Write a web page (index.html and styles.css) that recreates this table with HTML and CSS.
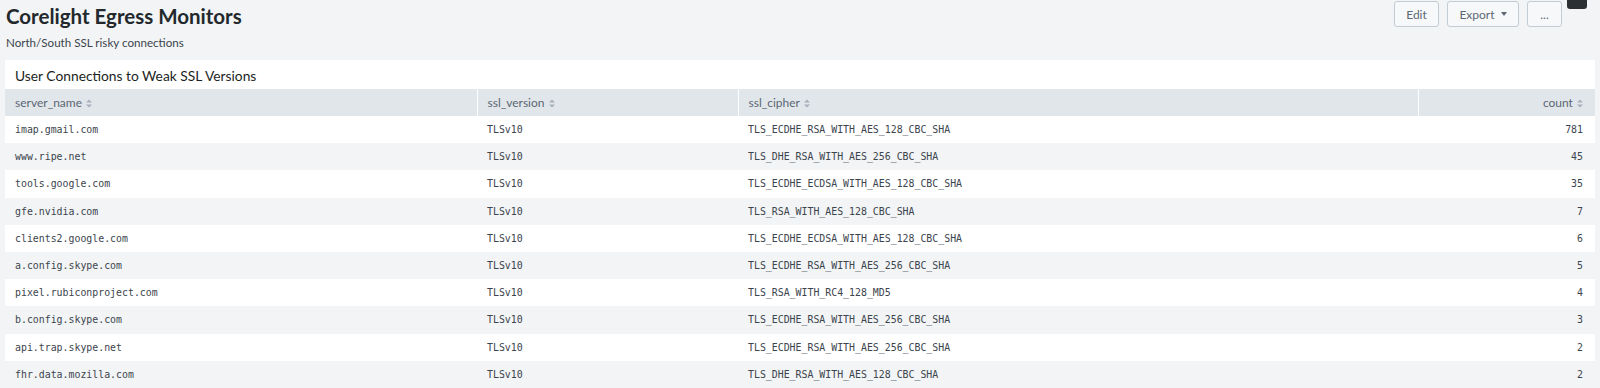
FILE: index.html
```html
<!DOCTYPE html>
<html>
<head>
<meta charset="utf-8">
<link rel="stylesheet" href="styles.css">
</head>
<body>
<div class="page">
  <header class="dash-header">
    <div class="dash-titles">
      <h1 class="dash-title">Corelight Egress Monitors</h1>
      <p class="dash-desc">North/South SSL risky connections</p>
    </div>
    <div class="dash-actions">
      <button class="btn btn-edit">Edit</button>
      <button class="btn btn-export">Export <span class="caret"></span></button>
      <button class="btn btn-more">...</button>
      <span class="dark-tab"></span>
    </div>
  </header>

  <section class="panel">
    <h2 class="panel-title">User Connections to Weak SSL Versions</h2>
    <table class="tbl">
      <colgroup>
        <col class="c1"><col class="c2"><col class="c3"><col class="c4">
      </colgroup>
      <thead>
        <tr>
          <th>server_name <svg class="sort" viewBox="0 0 6 9"><path d="M0 3.6L3 0.4L6 3.6Z M0 5.4L3 8.6L6 5.4Z"/></svg></th>
          <th>ssl_version <svg class="sort" viewBox="0 0 6 9"><path d="M0 3.6L3 0.4L6 3.6Z M0 5.4L3 8.6L6 5.4Z"/></svg></th>
          <th>ssl_cipher <svg class="sort" viewBox="0 0 6 9"><path d="M0 3.6L3 0.4L6 3.6Z M0 5.4L3 8.6L6 5.4Z"/></svg></th>
          <th class="num">count <svg class="sort" viewBox="0 0 6 9"><path d="M0 3.6L3 0.4L6 3.6Z M0 5.4L3 8.6L6 5.4Z"/></svg></th>
        </tr>
      </thead>
      <tbody>
        <tr><td>imap.gmail.com</td><td>TLSv10</td><td>TLS_ECDHE_RSA_WITH_AES_128_CBC_SHA</td><td class="num">781</td></tr>
        <tr><td>www.ripe.net</td><td>TLSv10</td><td>TLS_DHE_RSA_WITH_AES_256_CBC_SHA</td><td class="num">45</td></tr>
        <tr><td>tools.google.com</td><td>TLSv10</td><td>TLS_ECDHE_ECDSA_WITH_AES_128_CBC_SHA</td><td class="num">35</td></tr>
        <tr><td>gfe.nvidia.com</td><td>TLSv10</td><td>TLS_RSA_WITH_AES_128_CBC_SHA</td><td class="num">7</td></tr>
        <tr><td>clients2.google.com</td><td>TLSv10</td><td>TLS_ECDHE_ECDSA_WITH_AES_128_CBC_SHA</td><td class="num">6</td></tr>
        <tr><td>a.config.skype.com</td><td>TLSv10</td><td>TLS_ECDHE_RSA_WITH_AES_256_CBC_SHA</td><td class="num">5</td></tr>
        <tr><td>pixel.rubiconproject.com</td><td>TLSv10</td><td>TLS_RSA_WITH_RC4_128_MD5</td><td class="num">4</td></tr>
        <tr><td>b.config.skype.com</td><td>TLSv10</td><td>TLS_ECDHE_RSA_WITH_AES_256_CBC_SHA</td><td class="num">3</td></tr>
        <tr><td>api.trap.skype.net</td><td>TLSv10</td><td>TLS_ECDHE_RSA_WITH_AES_256_CBC_SHA</td><td class="num">2</td></tr>
        <tr><td>fhr.data.mozilla.com</td><td>TLSv10</td><td>TLS_DHE_RSA_WITH_AES_128_CBC_SHA</td><td class="num">2</td></tr>
      </tbody>
    </table>
  </section>
</div>
</body>
</html>
```

FILE: styles.css
```css
* { box-sizing: border-box; }
html, body {
  margin: 0;
  padding: 0;
  background: #f2f4f5;
  font-family: Lato, "Open Sans", "Liberation Sans", sans-serif;
  color: #3c444d;
  overflow: hidden;
}
.page {
  padding: 0 5px 0 5px;
}
.dash-header {
  display: flex;
  justify-content: space-between;
  align-items: flex-start;
  height: 60px;
}
.dash-titles {
  padding-left: 1px;
  padding-top: 4px;
}
.dash-title {
  margin: 0;
  font-size: 20.5px;
  line-height: 24px;
  font-weight: 700;
  color: #23282d;
}
.dash-desc {
  margin: 7px 0 0 0;
  font-size: 11.6px;
  line-height: 16px;
  color: #3c444d;
}
.dash-actions {
  position: relative;
  display: flex;
  gap: 8px;
  padding-top: 1px;
  padding-right: 33px;
}
.btn {
  height: 26px;
  border: 1px solid #c3cbd4;
  border-radius: 3px;
  background: #f7f8fa;
  color: #5c6773;
  font-family: inherit;
  font-size: 12px;
  padding: 0;
  display: inline-flex;
  align-items: center;
  justify-content: center;
  gap: 6px;
}
.btn-edit { width: 45px; }
.btn-export { width: 72px; }
.btn-more { width: 35px; }
.caret {
  width: 0; height: 0;
  border-left: 3.5px solid transparent;
  border-right: 3.5px solid transparent;
  border-top: 4px solid #5c6773;
}
.dark-tab {
  position: absolute;
  right: 8px;
  top: -11px;
  width: 20px;
  height: 20px;
  background: #2b3033;
  border-radius: 3px;
}
.panel {
  background: #fff;
}
.panel-title {
  margin: 0;
  padding: 7px 10px 5px 10px;
  height: 29px;
  font-size: 13.8px;
  line-height: 17px;
  font-weight: 400;
  color: #1b1f23;
}
.tbl {
  width: 100%;
  border-collapse: collapse;
  table-layout: fixed;
}
.c1 { width: 472px; }
.c2 { width: 261px; }
.c3 { width: 680px; }
.c4 { width: auto; }
.tbl th {
  background: #e1e6eb;
  height: 27px;
  padding: 0 10px;
  text-align: left;
  font-weight: 400;
  font-size: 12px;
  color: #5c6773;
  border-left: 1px solid #fff;
  white-space: nowrap;
}
.tbl th:first-child { border-left: none; }
.tbl td {
  height: 27.2px;
  padding: 0 10px;
  font-family: "DejaVu Sans Mono", "Liberation Mono", monospace;
  font-size: 9.9px;
  color: #3c444d;
  white-space: nowrap;
}
.tbl tbody tr:nth-child(even) td { background: #f2f4f5; }
.tbl .num { text-align: right; padding-right: 12px; }
.sort {
  display: inline-block;
  width: 6px;
  height: 9px;
  margin-left: 1px;
  vertical-align: -1px;
  fill: #a7b0b9;
}
```
